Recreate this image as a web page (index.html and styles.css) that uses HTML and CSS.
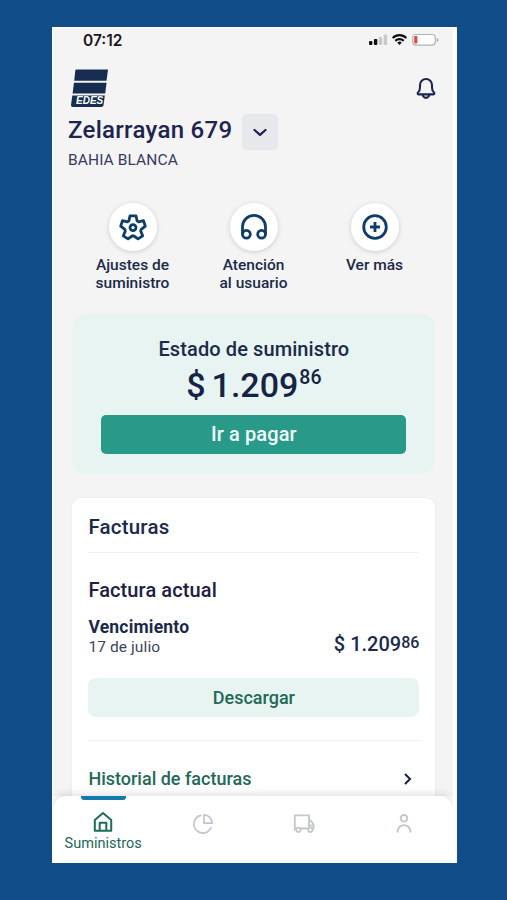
FILE: index.html
```html
<!DOCTYPE html>
<html lang="es">
<head>
    <meta charset="UTF-8">
    <meta name="viewport" content="width=device-width, initial-scale=1.0">
    <title>EDES</title>
    <link rel="stylesheet" href="styles.css">
</head>
<body>
<div class="phone">
    <div class="screen">
        <div class="status">
            <span class="time">07:12</span>
            <svg width="70" height="14" viewBox="0 0 70 14">
                <rect x="0" y="8" width="3.4" height="4" rx="1" fill="#111"/>
                <rect x="4.9" y="6" width="3.4" height="6" rx="1" fill="#111"/>
                <rect x="9.8" y="4" width="3.4" height="8" rx="1" fill="#c9c9c9"/>
                <rect x="14.7" y="1.5" width="3.4" height="10.5" rx="1" fill="#c9c9c9"/>
                <g fill="none" stroke="#111" stroke-width="2.2">
                    <path d="M23.7 5a9.6 9.6 0 0 1 13.6 0"/>
                    <path d="M26.3 7.9a6 6 0 0 1 8.4 0"/>
                </g>
                <path d="M28.3 9.7a3.1 3.1 0 0 1 4.4 0L30.5 12z" fill="#111"/>
                <rect x="43.7" y="1.5" width="22.6" height="10.6" rx="3" fill="#fdfdfd" stroke="#b3b3b3" stroke-width="1.2"/>
                <rect x="45.2" y="3" width="3.2" height="7.6" rx="1" fill="#e8483c"/>
                <path d="M67.7 5v4c1.2-.3 1.8-1.1 1.8-2s-.6-1.7-1.8-2z" fill="#aaa"/>
            </svg>
        </div>

        <div class="top">
            <div class="logo">
                <svg width="40" height="39" viewBox="0 0 40 39">
                    <path d="M6 .5h32l-1.500 11.200h-32.300l1-9.200q.2-2 .8-2z" fill="#162c50"/>
                    <path d="M4 13.700h32.500l-1.300 10.800h-32.600z" fill="#162c50"/>
                    <path d="M2.300 26.500h32.500l-1.300 9.700q-.3 1.800-2 1.800h-28.600q-2.200 0-1.900-2z" fill="#162c50"/>
                </svg>
                <span class="logo-name">EDES</span>
            </div>
            <svg class="bell" width="22" height="24" viewBox="0 0 22 24" fill="none" stroke="#1d2450" stroke-width="2.100" stroke-linejoin="round">
                <path d="M3 15.500q2-1.500 2-5V8a6 6 0 0 1 12 0v2.500q0 3.500 2 5a1.100 1.100 0 0 1-.6 1.900h-14.800a1.100 1.100 0 0 1-.6-1.900z"/>
                <path d="M7.800 17.500a3.200 3.400 0 0 0 6.400 0"/>
            </svg>
        </div>

        <div class="address">
            <h1>Zelarrayan 679</h1>
            <button class="select">
                <svg width="16" height="10" viewBox="0 0 16 10" fill="none" stroke="#1d2450" stroke-width="2.300" stroke-linecap="round" stroke-linejoin="round"><path d="M2.500 3l5.500 4.800 5.500-4.800"/></svg>
            </button>
        </div>
        <div class="city">BAHIA BLANCA</div>

        <div class="actions">
            <div class="action">
                <span class="circle">
                    <svg width="28" height="28" viewBox="0 0 28 28" fill="none" stroke="#0f3d69" stroke-width="2.800" stroke-linejoin="round">
                        <path d="M11 2.800h6l1.100 5.100 1.500 1 4.900-1.200 1.800 5.400-4.100 3.300-.5 1.700 2 4.700-4.700 3.100-4.100-2.900h-1.800l-4.100 2.900-4.700-3.100 2-4.700-.5-1.700L1.700 13.100l1.800-5.400 4.900 1.200 1.500-1z"/>
                        <circle cx="14" cy="14.600" r="3"/>
                    </svg>
                </span>
                <span>Ajustes de<br>suministro</span>
            </div>
            <div class="action">
                <span class="circle">
                    <svg width="28" height="28" viewBox="0 0 28 28" fill="none" stroke="#0f3d69" stroke-width="2.800">
                        <path d="M2.500 21.500V13.800a11.500 11.500 0 0 1 23 0v7.700"/>
                        <circle cx="6.400" cy="21.200" r="3.900"/>
                        <circle cx="21.600" cy="21.200" r="3.900"/>
                    </svg>
                </span>
                <span>Atención<br>al usuario</span>
            </div>
            <div class="action">
                <span class="circle">
                    <svg width="28" height="28" viewBox="0 0 28 28" fill="none" stroke="#0f3d69" stroke-width="2.800">
                        <circle cx="14" cy="14" r="11.300"/>
                        <path d="M14 9v10M9 14h10"/>
                    </svg>
                </span>
                <span>Ver más</span>
            </div>
        </div>

        <div class="balance">
            <h2>Estado de suministro</h2>
            <div class="total"><span class="sign">$</span>1.209<sup>86</sup></div>
            <button class="pay">Ir a pagar</button>
        </div>

        <div class="bills">
            <h2 class="bills-title">Facturas</h2>
            <h2 class="current">Factura actual</h2>
            <div class="due">
                <div>
                    <strong>Vencimiento</strong>
                    <div class="date">17 de julio</div>
                </div>
                <div class="amount">$ 1.209<sup>86</sup></div>
            </div>
            <button class="download">Descargar</button>
            <div class="history">
                <span>Historial de facturas</span>
                <svg width="10" height="14" viewBox="0 0 10 14" fill="none" stroke="#1d2444" stroke-width="2.100"><path d="M2 2l5 5-5 5"/></svg>
            </div>
        </div>
    </div>

    <div class="tabs">
        <div class="tab active">
            <svg width="20" height="22" viewBox="0 0 20 22" fill="none" stroke="#1d6b58" stroke-width="2" stroke-linejoin="round">
                <path d="M1.800 9L10 2l8.200 7v10.800H1.800z"/>
                <path d="M6.700 19.500v-7.700h6.600v7.700"/>
            </svg>
            <span>Suministros</span>
        </div>
        <div class="tab">
            <svg width="22" height="22" viewBox="0 0 22 22" fill="none" stroke="#c3c5cc" stroke-width="1.700" stroke-linejoin="round">
                <path d="M9.500 2.200a9 9 0 1 0 9.800 12"/>
                <path d="M12 1.800v8.400h8.200a8.300 8.300 0 0 0-8.200-8.400z"/>
            </svg>
        </div>
        <div class="tab">
            <svg width="22" height="22" viewBox="0 0 22 22" fill="none" stroke="#c3c7cc" stroke-width="1.800" stroke-linejoin="round">
                <path d="M3.300 16.500H1.800V2.300h14.200V15M7.500 15.500h7.500"/>
                <path d="M16 7h.8q4 3 4 7.200l-1.300 2.300"/>
                <path d="M16 12.500h4.300"/>
                <circle cx="5.400" cy="16.800" r="2.200"/>
                <circle cx="17.300" cy="16.800" r="2.200"/>
            </svg>
        </div>
        <div class="tab">
            <svg width="18" height="22" viewBox="0 0 18 22" fill="none" stroke="#c3c7cc" stroke-width="1.900">
                <circle cx="9" cy="5.300" r="3.300"/>
                <path d="M2.600 19.500v-1a6.400 6.400 0 0 1 12.800 0v1"/>
            </svg>
        </div>
    </div>
</div>
</body>
</html>
```
FILE: styles.css
```css
* {
    box-sizing: border-box;
}

body {
    margin: 0;
    height: 900px;
    padding: 27px 50px 0 52px;
    background: #114d89;
    font-family: Roboto, "Liberation Sans", sans-serif;
    color: #1b2a4b;
}

h1, h2 {
    margin: 0;
    font-weight: 500;
}

button {
    border: 0;
    padding: 0;
    font-family: inherit;
}

.phone {
    display: flex;
    flex-direction: column;
    height: 836px;
    background: #fff;
    padding: 1px 4px 0 1px;
}

.screen {
    height: 768px;
    overflow: hidden;
    background: #f4f4f4;
}

.status {
    display: flex;
    justify-content: space-between;
    align-items: center;
    height: 26px;
    padding: 0 14px 2px 30px;
}

.time {
    font-family: Inter, sans-serif;
    font-size: 15.5px;
    font-weight: 600;
    color: #191919;
}

.top {
    display: flex;
    justify-content: space-between;
    padding: 15px 16px 0 17px;
}

.logo {
    position: relative;
    height: 39px;
}

.logo-name {
    position: absolute;
    left: 6px;
    top: 26px;
    font: italic 700 10px/12px "Liberation Sans", sans-serif;
    color: #fff;
}

.bell {
    margin-top: 8px;
}

.address {
    display: flex;
    align-items: center;
    height: 48px;
    padding-left: 15px;
}

.address h1 {
    font-size: 24px;
    color: #1d2450;
    letter-spacing: 0.3px;
    width: 174px;
    line-height: 40px;
    padding-bottom: 4px;
    white-space: nowrap;
}

.select {
    display: flex;
    align-items: center;
    justify-content: center;
    width: 36px;
    height: 36px;
    border-radius: 5px;
    background: #e7e8eb;
}

.city {
    padding-left: 15px;
    font-size: 15.5px;
    letter-spacing: 0.1px;
    line-height: 16px;
    margin-top: -4px;
    color: #353b5f;
}

.actions {
    display: grid;
    grid-template-columns: repeat(3, 121px);
    padding: 35px 0 0 19px;
}

.action {
    display: flex;
    flex-direction: column;
    align-items: center;
    text-align: center;
    font-size: 15.5px;
    font-weight: 500;
    line-height: 18px;
}

.circle {
    display: flex;
    align-items: center;
    justify-content: center;
    width: 48px;
    height: 48px;
    margin-bottom: 5px;
    border-radius: 50%;
    background: #fff;
    box-shadow: 0 1px 5px rgba(0, 0, 0, 0.16);
}

.balance {
    width: 363px;
    height: 160px;
    margin: 22px 0 0 19.4px;
    padding: 22px 29px 0;
    border-radius: 14px;
    background: #e7f4f1;
    text-align: center;
}

.balance h2 {
    font-size: 20px;
    letter-spacing: 0.1px;
    line-height: 26px;
}

.total {
    display: flex;
    justify-content: center;
    height: 53px;
    font-size: 34px;
    font-weight: 500;
    line-height: 46px;
    color: #152445;
}

.sign {
    margin-right: 6px;
}

sup {
    vertical-align: top;
}

.total sup {
    margin-left: 1px;
    font-size: 19.5px;
    line-height: 31px;
}

.pay {
    width: 305px;
    height: 39px;
    padding-bottom: 1px;
    border-radius: 5px;
    background: #29998a;
    color: #f2fffc;
    font-size: 20px;
    font-weight: 500;
    letter-spacing: 0.1px;
}

.bills {
    width: 363px;
    height: 320px;
    margin: 24px 0 0 19.4px;
    padding: 14px 16px 0;
    border-radius: 9px;
    background: #fff;
    box-shadow: 0 0 2px rgba(0, 0, 0, 0.08);
}

.bills-title {
    height: 41px;
    border-bottom: 1px solid #f0f0f0;
    font-size: 20.5px;
    letter-spacing: 0.2px;
    line-height: 30px;
}

.current {
    margin-top: 23px;
    font-size: 20px;
    letter-spacing: 0.1px;
    line-height: 28px;
    color: #202043;
}

.due {
    display: flex;
    justify-content: space-between;
    height: 74px;
    padding-top: 13px;
}

.due strong {
    display: block;
    font-size: 17.5px;
    letter-spacing: 0.2px;
    line-height: 20px;
}

.date {
    font-size: 15.5px;
    letter-spacing: 0.1px;
    line-height: 20px;
    color: #3a465c;
}

.amount {
    font-size: 20px;
    font-weight: 500;
    line-height: 55px;
}

.amount sup {
    font-size: 16px;
    line-height: 51px;
}

.download {
    width: 331px;
    height: 39px;
    border-radius: 8px;
    background: #e7f4f1;
    color: #226957;
    font-size: 18px;
    font-weight: 500;
}

.history {
    display: flex;
    justify-content: space-between;
    align-items: center;
    margin-top: 23px;
    padding: 27px 6px 0 0;
    border-top: 1px solid #eee;
    font-size: 18px;
    font-weight: 500;
    line-height: 22px;
    color: #226957;
}

.tabs {
    display: grid;
    grid-template-columns: repeat(4, 100.3px);
    position: relative;
    height: 67px;
    border-radius: 14px 14px 0 0;
    background: #fff;
    box-shadow: 0 -2px 8px rgba(0, 0, 0, 0.13);
    clip-path: inset(-12px 0 0 0);
}

.tab {
    display: flex;
    flex-direction: column;
    align-items: center;
    padding-top: 17px;
}

.active {
    padding-top: 0;
    font-size: 14.5px;
    line-height: 17px;
    color: #226957;
}

.active::before {
    content: "";
    width: 45px;
    height: 4px;
    margin-bottom: 11px;
    border-radius: 0 0 3px 3px;
    background: #1579ae;
}

.active span {
    margin-top: 2px;
}
```
